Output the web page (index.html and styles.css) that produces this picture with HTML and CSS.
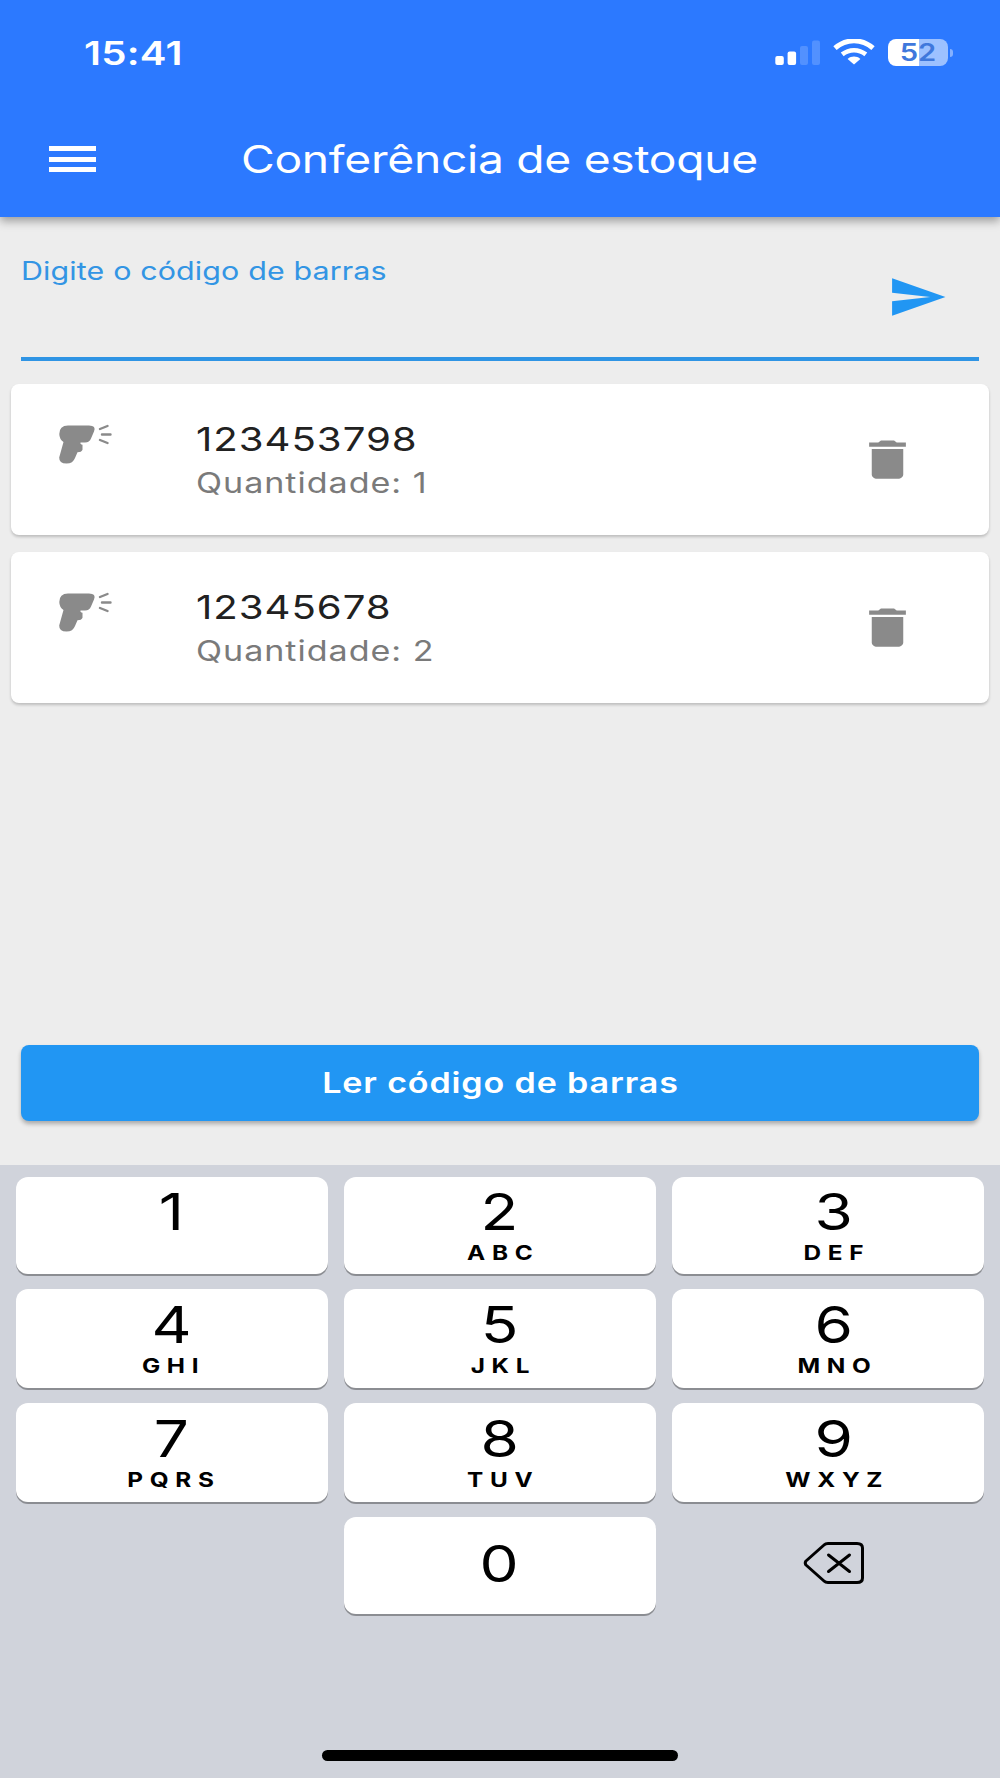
FILE: index.html
```
<!DOCTYPE html>
<html lang="pt-BR">
<head>
    <meta charset="UTF-8">
    <meta name="viewport" content="width=device-width, initial-scale=1.0">
    <title>Conferência de estoque</title>
    <link rel="stylesheet" href="styles.css">
</head>
<body>
    <header class="header">
        <div class="status-bar">
            <span class="time wide">15:41</span>
            <div class="status-icons">
                <svg class="signal" width="46" height="26" viewBox="0 0 46 26" fill="#fff">
                    <rect x="0.3" y="17" width="8.500" height="9" rx="2"/>
                    <rect x="12.600" y="12.500" width="8.500" height="13.500" rx="2"/>
                    <rect x="25" y="7" width="8" height="19" rx="2" opacity="0.18"/>
                    <rect x="37" y="1.500" width="8" height="24.500" rx="2" opacity="0.18"/>
                </svg>
                <svg class="wifi" width="42" height="26" viewBox="0 0 42 26" fill="none" stroke="#fff">
                    <path d="M2 9.2C13-.6 29-.6 40 9.2" stroke-width="5"/>
                    <path d="M9.2 15.4c7-5.6 16.6-5.6 23.6 0" stroke-width="4.6"/>
                    <path d="M14.6 20c3.8-3.2 9-3.2 12.8 0L21 25.5z" fill="#fff" stroke="none"/>
                </svg>
                <div class="battery"><span class="wide">52</span></div>
                <i class="battery-tip"></i>
            </div>
        </div>
        <div class="toolbar">
            <button class="menu-button" aria-label="Menu"><i></i><i></i><i></i></button>
            <h1><span class="wide">Conferência de estoque</span></h1>
        </div>
    </header>

    <main class="content">
        <div class="field">
            <label class="wide" for="codigo">Digite o código de barras</label>
            <input type="text" id="codigo" inputmode="numeric">
            <button class="send-button" aria-label="Enviar">
                <svg width="61" height="50" viewBox="0 0 24 24" preserveAspectRatio="none" fill="#2196f3">
                    <path d="M2.01 21L23 12 2.01 3 2 10l15 2-15 2z"/>
                </svg>
            </button>
        </div>

        <div class="card">
            <svg class="scanner" width="53" height="40" viewBox="0 0 53 40">
                <path d="M9 1.500H30q7.500 0 5 6L32 14.500q-1.500 4-6 4H21.500q-.5 2 2 2.300v5q-1 2.500-5 2.500L16 34q-2 5.500-8.500 5.500-7.500 0-7.300-6L4.500 18Q.3 15 .3 10 .3 1.500 9 1.500z" fill="#8a8a8a"/>
                <path d="M41 5L48.500 2M43 10.500h8.500M41 16l7.500 3" stroke="#8a8a8a" stroke-width="2.400" stroke-linecap="round" fill="none"/>
            </svg>
            <div class="card-text">
                <p class="code wide">123453798</p>
                <p class="amount wide">Quantidade: 1</p>
            </div>
            <button class="delete-button" aria-label="Excluir">
                <svg width="63" height="51" viewBox="0 0 24 24" preserveAspectRatio="none" fill="#8a8a8a">
                    <path d="M6 19c0 1.100.9 2 2 2h8c1.100 0 2-.9 2-2V7H6v12zM19 4h-3.500l-1-1h-5l-1 1H5v2h14V4z"/>
                </svg>
            </button>
        </div>

        <div class="card">
            <svg class="scanner" width="53" height="40" viewBox="0 0 53 40">
                <path d="M9 1.500H30q7.500 0 5 6L32 14.500q-1.500 4-6 4H21.500q-.5 2 2 2.300v5q-1 2.500-5 2.500L16 34q-2 5.500-8.500 5.500-7.500 0-7.300-6L4.500 18Q.3 15 .3 10 .3 1.500 9 1.500z" fill="#8a8a8a"/>
                <path d="M41 5L48.500 2M43 10.500h8.500M41 16l7.500 3" stroke="#8a8a8a" stroke-width="2.400" stroke-linecap="round" fill="none"/>
            </svg>
            <div class="card-text">
                <p class="code wide">12345678</p>
                <p class="amount wide">Quantidade: 2</p>
            </div>
            <button class="delete-button" aria-label="Excluir">
                <svg width="63" height="51" viewBox="0 0 24 24" preserveAspectRatio="none" fill="#8a8a8a">
                    <path d="M6 19c0 1.100.9 2 2 2h8c1.100 0 2-.9 2-2V7H6v12zM19 4h-3.500l-1-1h-5l-1 1H5v2h14V4z"/>
                </svg>
            </button>
        </div>

        <button class="scan-button"><span class="wide">Ler código de barras</span></button>
    </main>

    <footer class="keyboard">
        <div class="keys">
            <button class="key"><b class="wide">1</b></button>
            <button class="key"><b class="wide">2</b><small class="wide">ABC</small></button>
            <button class="key"><b class="wide">3</b><small class="wide">DEF</small></button>
            <button class="key"><b class="wide">4</b><small class="wide">GHI</small></button>
            <button class="key"><b class="wide">5</b><small class="wide">JKL</small></button>
            <button class="key"><b class="wide">6</b><small class="wide">MNO</small></button>
            <button class="key"><b class="wide">7</b><small class="wide">PQRS</small></button>
            <button class="key"><b class="wide">8</b><small class="wide">TUV</small></button>
            <button class="key"><b class="wide">9</b><small class="wide">WXYZ</small></button>
            <button class="key zero"><b class="wide">0</b></button>
            <button class="key backspace" aria-label="Apagar">
                <svg width="62" height="44" viewBox="0 0 62 44" fill="none" stroke="#000" stroke-width="3" stroke-linecap="round" stroke-linejoin="round">
                    <path d="M25 2.500H54q5.500 0 5.500 4.500V37q0 4.500-5.500 4.500H25q-2.500 0-4-1.500L3 24Q1.500 22 3 20L21 4q1.500-1.500 4-1.500z"/>
                    <path d="M25.500 14L46.500 30.500M46.500 14L25.500 30.500"/>
                </svg>
            </button>
        </div>
        <div class="home-bar"></div>
    </footer>
</body>
</html>
```
FILE: styles.css
```
* {
    box-sizing: border-box;
}

body {
    margin: 0;
    height: 1778px;
    display: flex;
    flex-direction: column;
    font-family: Inter, "Liberation Sans", sans-serif;
    background-color: #ededed;
    overflow: hidden;
}

button {
    padding: 0;
    border: none;
    background: none;
    font-family: inherit;
}

svg {
    display: block;
}

p {
    margin: 0;
}

/* Wide lettering used on every label */
.wide {
    display: inline-block;
    transform: scaleX(1.217);
}

/* Header */
.header {
    height: 217px;
    background-color: #2c79ff;
    color: #fff;
    box-shadow: 0 4px 9px rgba(0, 0, 0, 0.35);
}

.status-bar {
    display: flex;
    justify-content: space-between;
    height: 106px;
    padding: 33px 47px 0 84px;
}

.time {
    height: 40px;
    line-height: 40px;
    font-size: 33px;
    font-weight: 600;
    letter-spacing: 0.2px;
    transform-origin: left;
}

.status-icons {
    display: flex;
    padding-top: 6px;
}

.wifi {
    margin: 0 13px 0 12px;
}

.battery {
    width: 60px;
    height: 27px;
    border-radius: 8px;
    background: linear-gradient(to right, #fff 31px, #9dc1ff 31px);
    color: #3f78dc;
    font-size: 24px;
    font-weight: 600;
    line-height: 27px;
    text-align: center;
}

.battery-tip {
    width: 3px;
    height: 8px;
    margin: 10px 0 0 2px;
    border-radius: 0 3px 3px 0;
    background-color: #86b1ff;
}

.toolbar {
    display: grid;
    grid-template-columns: 143px 1fr 145px;
    align-items: center;
    height: 106px;
}

.menu-button {
    display: flex;
    flex-direction: column;
    gap: 5.5px;
    width: 47px;
    margin-left: 49px;
}

.menu-button i {
    height: 5px;
    background-color: #fff;
}

.toolbar h1 {
    margin: 0;
    font-size: 38px;
    font-weight: 400;
    letter-spacing: -0.25px;
    text-align: center;
    white-space: nowrap;
}

/* Content */
.content {
    display: flex;
    flex-direction: column;
    height: 948px;
    padding: 0 11px;
}

.field {
    display: grid;
    grid-template-columns: 1fr 100px;
    height: 144px;
    margin: 0 10px 23px;
    border-bottom: 4px solid #2f94e4;
}

.field label {
    grid-column: 1;
    justify-self: start;
    padding-top: 38px;
    line-height: 32px;
    font-size: 25px;
    letter-spacing: 0.1px;
    color: #3395e4;
    transform-origin: left;
}

.field input {
    grid-column: 1;
    height: 60px;
    border: none;
    outline: none;
    background: none;
    font-size: 32px;
}

.send-button {
    grid-column: 2;
    grid-row: 1 / 3;
    align-self: start;
    padding: 55px 0 0 8px;
}

.card {
    display: grid;
    grid-template-columns: 185px 1fr 133px;
    height: 151px;
    margin-bottom: 17px;
    border-radius: 8px;
    background-color: #fff;
    box-shadow: 0 2px 3px rgba(0, 0, 0, 0.2);
}

.scanner {
    margin: 40px 0 0 48px;
}

.card-text {
    display: flex;
    flex-direction: column;
    align-items: flex-start;
    padding-top: 34px;
}

.card-text p {
    transform-origin: left;
}

.code {
    line-height: 42px;
    font-size: 33px;
    letter-spacing: 0.8px;
    color: #212121;
}

.amount {
    line-height: 46px;
    font-size: 28px;
    letter-spacing: 0.8px;
    color: #7a7a7a;
}

.delete-button {
    align-self: start;
    margin: 50px 5px 0 0;
}

.scan-button {
    height: 76px;
    margin: auto 10px 44px;
    padding-bottom: 1px;
    border-radius: 8px;
    background-color: #2196f3;
    box-shadow: 0 3px 4px rgba(0, 0, 0, 0.28);
    color: #fff;
    font-size: 28px;
    font-weight: 600;
    letter-spacing: 0.7px;
}

/* Keyboard */
.keyboard {
    flex: 1;
    padding: 12px 16px 0;
    background-color: #d0d3db;
}

.keys {
    display: grid;
    grid-template-columns: repeat(3, 312px);
    grid-template-rows: 97px 99px 99px 97px;
    gap: 15px 16px;
}

.key {
    display: flex;
    flex-direction: column;
    align-items: center;
    padding-top: 7px;
    border-radius: 12px;
    background-color: #fff;
    box-shadow: 0 2px 0 #8b8d92;
    color: #000;
}

.key:nth-child(n+4) {
    padding-top: 8px;
}

.key:nth-child(3n) {
    padding-left: 12px;
}

.key:nth-child(3n+1) {
    padding-right: 2px;
}

.key b {
    line-height: 56px;
    font-size: 51px;
    font-weight: 400;
}

.key small {
    padding-left: 5px;
    line-height: 26px;
    font-size: 20px;
    font-weight: 700;
    letter-spacing: 5.5px;
}

.key.zero {
    grid-column: 2;
    justify-content: center;
    padding: 0 2px 3px 0;
}

.key.backspace {
    padding: 24px 0 0 12px;
    background: none;
    box-shadow: none;
}

.home-bar {
    width: 356px;
    height: 11px;
    margin: 136px auto 0;
    border-radius: 6px;
    background-color: #000;
}
```
